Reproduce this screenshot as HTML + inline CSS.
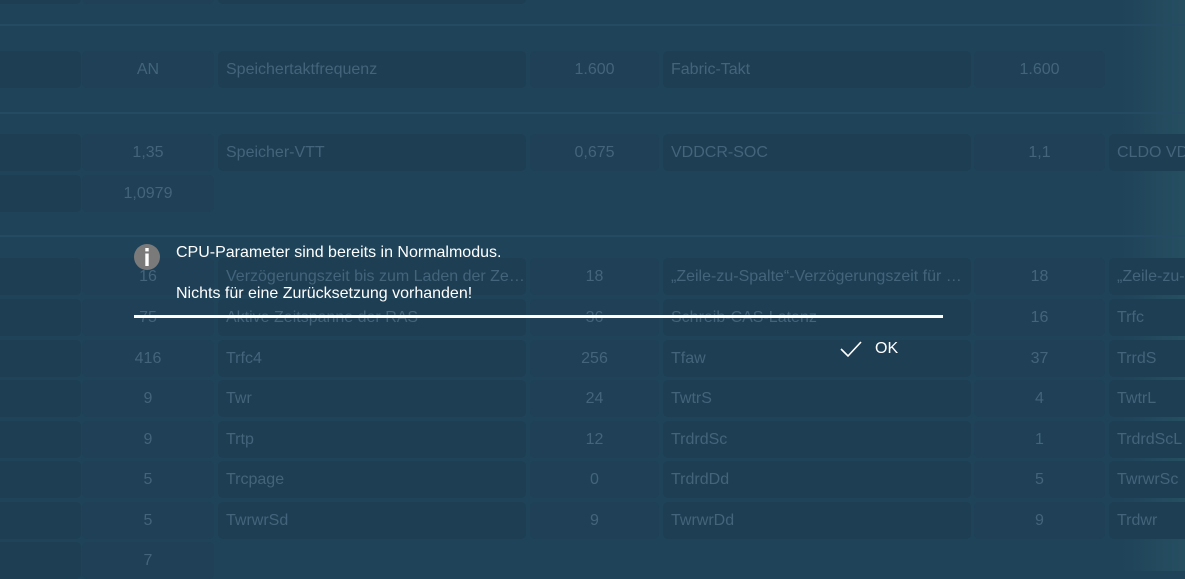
<!DOCTYPE html>
<html><head><meta charset="utf-8">
<style>
*{margin:0;padding:0;box-sizing:border-box}
body{width:1185px;height:571px;overflow:hidden;background:#1f4359;font-family:"Liberation Sans","DejaVu Sans",sans-serif;position:relative}
.bgr{position:absolute;left:1120px;top:0;width:65px;height:571px;background:linear-gradient(90deg,rgba(40,80,95,0),rgba(45,90,105,0.5))}
.sep{position:absolute;left:0;width:1185px;height:2px;background:#244b61}
.c{position:absolute;height:37px;border-radius:5px;background:#1e3e54;color:#43647a;font-size:16px;line-height:37px;white-space:nowrap;overflow:hidden}
.v{background:#1f4057;text-align:center}
.n{padding-left:8px}
.dlg{position:absolute;color:#fff;font-size:16px}
</style></head><body>
<div class="bgr"></div>
<div class="c" style="left:-10px;top:-33px;width:91px"></div>
<div class="c v" style="left:82px;top:-33px;width:132px"></div>
<div class="c" style="left:218px;top:-33px;width:308px"></div>
<div class="sep" style="top:24px"></div>
<div class="sep" style="top:112px"></div>
<div class="sep" style="top:235px"></div>

<div class="c" style="left:-10px;top:51px;width:91px"></div>
<div class="c v" style="left:82px;top:51px;width:132px">AN</div>
<div class="c n" style="left:218px;top:51px;width:308px">Speichertaktfrequenz</div>
<div class="c v" style="left:530px;top:51px;width:129px">1.600</div>
<div class="c n" style="left:663px;top:51px;width:308px">Fabric-Takt</div>
<div class="c v" style="left:974px;top:51px;width:131px">1.600</div>

<div class="c" style="left:-10px;top:134px;width:91px"></div>
<div class="c v" style="left:82px;top:134px;width:132px">1,35</div>
<div class="c n" style="left:218px;top:134px;width:308px">Speicher-VTT</div>
<div class="c v" style="left:530px;top:134px;width:129px">0,675</div>
<div class="c n" style="left:663px;top:134px;width:308px">VDDCR-SOC</div>
<div class="c v" style="left:974px;top:134px;width:131px">1,1</div>
<div class="c n" style="left:1109px;top:134px;width:100px">CLDO VDDP</div>

<div class="c" style="left:-10px;top:175px;width:91px"></div>
<div class="c v" style="left:82px;top:175px;width:132px">1,0979</div>

<div class="c" style="left:-10px;top:258px;width:91px"></div><div class="c v" style="left:82px;top:258px;width:132px">16</div><div class="c n" style="left:218px;top:258px;width:308px">Verzögerungszeit bis zum Laden der Ze…</div><div class="c v" style="left:530px;top:258px;width:129px">18</div><div class="c n" style="left:663px;top:258px;width:308px">„Zeile-zu-Spalte“-Verzögerungszeit für …</div><div class="c v" style="left:974px;top:258px;width:131px">18</div><div class="c n" style="left:1109px;top:258px;width:100px">„Zeile-zu-Spalte</div>

<div class="c" style="left:-10px;top:299px;width:91px"></div><div class="c v" style="left:82px;top:299px;width:132px">75</div><div class="c n" style="left:218px;top:299px;width:308px">Aktive Zeitspanne der RAS</div><div class="c v" style="left:530px;top:299px;width:129px">36</div><div class="c n" style="left:663px;top:299px;width:308px">Schreib-CAS-Latenz</div><div class="c v" style="left:974px;top:299px;width:131px">16</div><div class="c n" style="left:1109px;top:299px;width:100px">Trfc</div>

<div class="c" style="left:-10px;top:340px;width:91px"></div><div class="c v" style="left:82px;top:340px;width:132px">416</div><div class="c n" style="left:218px;top:340px;width:308px">Trfc4</div><div class="c v" style="left:530px;top:340px;width:129px">256</div><div class="c n" style="left:663px;top:340px;width:308px">Tfaw</div><div class="c v" style="left:974px;top:340px;width:131px">37</div><div class="c n" style="left:1109px;top:340px;width:100px">TrrdS</div>

<div class="c" style="left:-10px;top:380px;width:91px"></div><div class="c v" style="left:82px;top:380px;width:132px">9</div><div class="c n" style="left:218px;top:380px;width:308px">Twr</div><div class="c v" style="left:530px;top:380px;width:129px">24</div><div class="c n" style="left:663px;top:380px;width:308px">TwtrS</div><div class="c v" style="left:974px;top:380px;width:131px">4</div><div class="c n" style="left:1109px;top:380px;width:100px">TwtrL</div>

<div class="c" style="left:-10px;top:421px;width:91px"></div><div class="c v" style="left:82px;top:421px;width:132px">9</div><div class="c n" style="left:218px;top:421px;width:308px">Trtp</div><div class="c v" style="left:530px;top:421px;width:129px">12</div><div class="c n" style="left:663px;top:421px;width:308px">TrdrdSc</div><div class="c v" style="left:974px;top:421px;width:131px">1</div><div class="c n" style="left:1109px;top:421px;width:100px">TrdrdScL</div>

<div class="c" style="left:-10px;top:461px;width:91px"></div><div class="c v" style="left:82px;top:461px;width:132px">5</div><div class="c n" style="left:218px;top:461px;width:308px">Trcpage</div><div class="c v" style="left:530px;top:461px;width:129px">0</div><div class="c n" style="left:663px;top:461px;width:308px">TrdrdDd</div><div class="c v" style="left:974px;top:461px;width:131px">5</div><div class="c n" style="left:1109px;top:461px;width:100px">TwrwrSc</div>

<div class="c" style="left:-10px;top:502px;width:91px"></div><div class="c v" style="left:82px;top:502px;width:132px">5</div><div class="c n" style="left:218px;top:502px;width:308px">TwrwrSd</div><div class="c v" style="left:530px;top:502px;width:129px">9</div><div class="c n" style="left:663px;top:502px;width:308px">TwrwrDd</div><div class="c v" style="left:974px;top:502px;width:131px">9</div><div class="c n" style="left:1109px;top:502px;width:100px">Trdwr</div>

<div class="c" style="left:-10px;top:542px;width:91px"></div><div class="c v" style="left:82px;top:542px;width:132px">7</div>

<svg style="position:absolute;left:133px;top:243px" width="28" height="28" viewBox="0 0 28 28">
<circle cx="14" cy="14" r="13" fill="#7a7a7a"/>
<rect x="12.3" y="5" width="3.4" height="3.4" fill="#fff"/>
<rect x="12.3" y="10.5" width="3.4" height="12.5" fill="#fff"/>
</svg>
<div class="dlg" style="left:176px;top:244px">CPU-Parameter sind bereits in Normalmodus.</div>
<div class="dlg" style="left:176px;top:285px">Nichts für eine Zurücksetzung vorhanden!</div>
<div style="position:absolute;left:134px;top:315px;width:809px;height:3px;background:#fff"></div>
<svg style="position:absolute;left:839px;top:340px" width="24" height="18" viewBox="0 0 24 18">
<path d="M2 9 L9 16 L22 2" fill="none" stroke="#fff" stroke-width="1.6"/>
</svg>
<div class="dlg" style="left:875px;top:340px">OK</div>
</body></html>
